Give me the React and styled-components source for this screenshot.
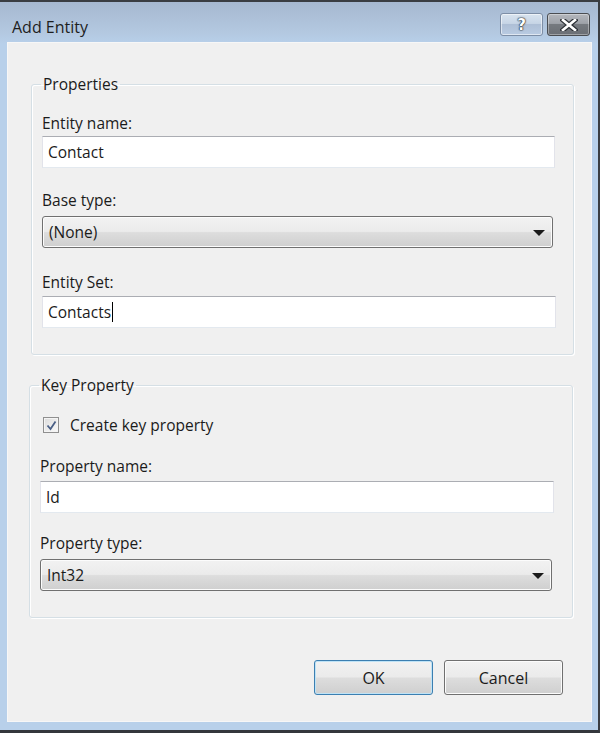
import React from 'react';
import styled, {createGlobalStyle} from 'styled-components';

const GlobalStyle = createGlobalStyle`
    html, body {
        margin: 0;
        padding: 0;
        background: #b6cde6;
    }
    * {
        box-sizing: border-box;
    }
`;

const Window = styled.div`
    width: 600px;
    height: 733px;
    display: flex;
    flex-direction: column;
    background: linear-gradient(to bottom, #a6b8d0 0px, #b3c8e0 30px, #b8d0ea 42px, #b8d0ea 100%);
    border-top: 2px solid #3a3d42;
    border-right: 2px solid #3a3d42;
    border-bottom: 3px solid #34373c;
    font-family: "Open Sans", "Noto Sans", sans-serif;
    color: #1b1b1b;
`;

const TitleBar = styled.div`
    height: 40px;
    display: flex;
    align-items: flex-start;
    justify-content: space-between;
    padding: 0 8px 0 12px;
`;

const Title = styled.h1`
    margin: 15px 0 0 0;
    font-size: 16px;
    font-weight: 400;
    line-height: 20px;
    color: #1e1e1e;
`;

const CaptionButtons = styled.div`
    display: flex;
    gap: 4px;
    margin-top: 11px;
`;

const CaptionButton = styled.div`
    width: 43px;
    height: 23px;
    border-radius: 3px;
    display: flex;
    align-items: center;
    justify-content: center;
    border: 1px solid ${p => p.$close ? '#4a4d52' : '#7d8ea6'};
    background: ${p => p.$close
        ? 'linear-gradient(to bottom, #b4b7bd 0%, #9ea2a9 45%, #75797f 50%, #6b6f75 100%)'
        : 'linear-gradient(to bottom, #d8e3ef 0%, #c7d5e6 45%, #aebfd6 50%, #b9cbe2 100%)'};
    box-shadow: inset 0 0 0 1px ${p => p.$close ? 'rgba(255,255,255,0.35)' : 'rgba(255,255,255,0.55)'};
    font-family: "DejaVu Sans", sans-serif;
    font-weight: 700;
    font-size: 15px;
    color: #ffffff;
    text-shadow: 0 0 2px #1d2228, 0 0 1px #1d2228, 0 0 1px #1d2228;
`;

const Client = styled.div`
    flex: 1;
    margin: 0 6px 8px 7px;
    background: #f0f0f0;
    border: 1px solid #f7f7f7;
    display: flex;
    flex-direction: column;
    padding: 32px 17px 0 21px;
`;

const Group = styled.fieldset`
    margin: ${p => p.$top || 0}px ${p => p.$end || 0}px 0 ${p => p.$inset || 0}px;
    padding: 0 19px 0 10px;
    height: ${p => p.$height}px;
    border: 1px solid #d5dfe5;
    border-radius: 3px;
    box-shadow: inset 1px 1px 0 #ffffff, 1px 1px 0 #ffffff;
    min-width: 0;
`;

const Legend = styled.legend`
    padding: 0 2px;
    margin-left: -1px;
    font-size: 15.5px;
    line-height: 18px;
`;

const Label = styled.div`
    font-size: 15.5px;
    line-height: 20px;
    margin-top: ${p => p.$top}px;
    margin-bottom: ${p => p.$bottom || 3}px;
`;

const TextBox = styled.div`
    height: 32px;
    display: flex;
    align-items: center;
    padding-left: 5px;
    background: #ffffff;
    border: 1px solid #e2e3ea;
    border-top-color: #abadb3;
    border-bottom-color: #e3e9ef;
    font-size: 15.5px;
    margin-right: ${p => p.$right || 0}px;
`;

const Caret = styled.span`
    display: inline-block;
    width: 1px;
    height: 20px;
    background: #000;
    margin-left: 1px;
`;

const Combo = styled.div`
    height: 32px;
    display: flex;
    align-items: center;
    justify-content: space-between;
    padding: 0 7px 0 6px;
    border: 1px solid #707070;
    border-radius: 3px;
    background: linear-gradient(to bottom, #f2f2f2 0%, #ebebeb 48%, #dddddd 52%, #cfcfcf 100%);
    box-shadow: inset 0 0 0 1px #fcfcfc;
    font-size: 15.5px;
    margin-right: ${p => p.$right || 0}px;
`;

const Arrow = styled.span`
    width: 0;
    height: 0;
    border-left: 6px solid transparent;
    border-right: 6px solid transparent;
    border-top: 6px solid #1a1a1a;
    margin-top: 2px;
`;

const CheckRow = styled.label`
    display: flex;
    align-items: center;
    gap: 11px;
    margin: 21px 0 0 3px;
    font-size: 15.5px;
    line-height: 20px;
`;

const CheckBox = styled.span`
    width: 16px;
    height: 16px;
    border: 1px solid #8f8f8f;
    background: linear-gradient(135deg, #dcdcdc, #fafafa);
    box-shadow: inset 0 0 0 1px #f4f4f4;
    display: flex;
    align-items: center;
    justify-content: center;
`;

const Footer = styled.div`
    display: flex;
    justify-content: flex-end;
    gap: 11px;
    margin-top: 42px;
    padding-right: 11px;
`;

const Button = styled.div`
    width: 119px;
    height: 35px;
    display: flex;
    align-items: center;
    justify-content: center;
    border: 1px solid ${p => p.$default ? '#3c7fb1' : '#707070'};
    border-radius: 3px;
    background: linear-gradient(to bottom, #f2f2f2 0%, #ebebeb 48%, #dddddd 52%, #cfcfcf 100%);
    box-shadow: inset 0 0 0 1px ${p => p.$default ? '#bfe3f6' : '#fcfcfc'};
    font-size: 16px;
`;

const Field = ({label, top, bottom, children}) => (
    <>
        <Label $top={top} $bottom={bottom}>{label}</Label>
        {children}
    </>
);

export default function App() {
    return (
        <>
            <GlobalStyle/>
            <Window>
                <TitleBar>
                    <Title>Add Entity</Title>
                    <CaptionButtons>
                        <CaptionButton>?</CaptionButton>
                        <CaptionButton $close>
                            <svg width="18" height="12" viewBox="0 0 18 12">
                                <path d="M3 1 L15 11 M15 1 L3 11" stroke="#2b2f35" strokeWidth="5" strokeLinecap="square"/>
                                <path d="M3 1 L15 11 M15 1 L3 11" stroke="#ffffff" strokeWidth="2.6" strokeLinecap="square"/>
                            </svg>
                        </CaptionButton>
                    </CaptionButtons>
                </TitleBar>
                <Client>
                    <Group $inset={2} $height={280}>
                        <Legend>Properties</Legend>
                        <Field label="Entity name:" top={20}>
                            <TextBox $right={-1}>Contact</TextBox>
                        </Field>
                        <Field label="Base type:" top={22} bottom={6}>
                            <Combo $right={1}>(None)<Arrow/></Combo>
                        </Field>
                        <Field label="Entity Set:" top={24} bottom={4}>
                            <TextBox $right={-2}>Contacts<Caret/></TextBox>
                        </Field>
                    </Group>
                    <Group $height={242} $top={21} $end={1}>
                        <Legend>Key Property</Legend>
                        <CheckRow>
                            <CheckBox>
                                <svg width="11" height="11" viewBox="0 0 11 11">
                                    <path d="M1.5 5.5 L4.5 9 L9.5 1.5" fill="none" stroke="#4a5f86" strokeWidth="1.8"/>
                                </svg>
                            </CheckBox>
                            Create key property
                        </CheckRow>
                        <Field label="Property name:" top={21} bottom={5}>
                            <TextBox $right={-1}>Id</TextBox>
                        </Field>
                        <Field label="Property type:" top={20} bottom={6}>
                            <Combo $right={1}>Int32<Arrow/></Combo>
                        </Field>
                    </Group>
                    <Footer>
                        <Button $default>OK</Button>
                        <Button>Cancel</Button>
                    </Footer>
                </Client>
            </Window>
        </>
    );
}
